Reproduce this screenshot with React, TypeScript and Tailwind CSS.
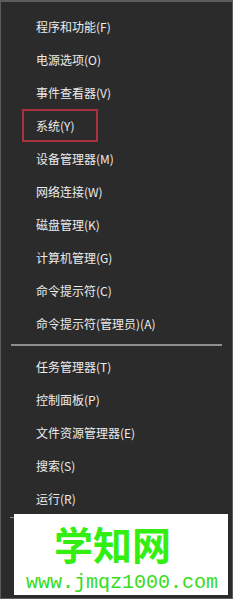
const TOP = [
  "程序和功能(F)",
  "电源选项(O)",
  "事件查看器(V)",
  "系统(Y)",
  "设备管理器(M)",
  "网络连接(W)",
  "磁盘管理(K)",
  "计算机管理(G)",
  "命令提示符(C)",
  "命令提示符(管理员)(A)",
];

const BOTTOM = ["任务管理器(T)", "控制面板(P)", "文件资源管理器(E)", "搜索(S)", "运行(R)"];

const font = { fontFamily: '"Noto Sans CJK SC", "Liberation Sans", sans-serif' };

function Item({ label }: { label: string }) {
  const boxed = label === "系统(Y)";
  return (
    <div className="flex h-[33px] items-center text-[12px] text-[#ececec]">
      {boxed ? (
        <span className="ml-[21px] flex h-[33px] w-[76px] items-center border-2 border-[#a8323e] pl-[12px]">
          {label}
        </span>
      ) : (
        <span className="pl-[35px]">{label}</span>
      )}
    </div>
  );
}

export default function App() {
  return (
    <div
      style={font}
      className="relative flex h-[599px] w-[233px] flex-col overflow-hidden border border-t-2 border-[#5c5c5c] bg-[#2b2b2b]"
    >
      <div className="pt-[8px]">
        {TOP.map((l) => (
          <Item key={l} label={l} />
        ))}
      </div>
      <div className="flex h-[10px] items-center px-[10px]">
        <div className="h-[2px] w-full bg-[#8e8e8e]" />
      </div>
      <div>
        {BOTTOM.map((l) => (
          <Item key={l} label={l} />
        ))}
      </div>
      <div className="mt-[2px] ml-[9px] h-[1px] w-[5px] bg-[#8e8e8e]" />

      {/* watermark overlay */}
      <div className="absolute left-[13px] top-[512px] flex h-[81px] w-[214px] flex-col bg-white">
        <div
          className="mt-[9px] ml-[40px] text-[39px] font-bold leading-[40px] text-[#33ee11]"
          style={{ fontFamily: '"Noto Sans CJK SC", sans-serif' }}
        >
          学知网
        </div>
        <div
          className="mt-[10px] ml-[12px] text-[20px] leading-[20px] text-[#33dd22]"
          style={{ fontFamily: '"Liberation Mono", monospace' }}
        >
          www.jmqz1000.com
        </div>
      </div>
    </div>
  );
}
